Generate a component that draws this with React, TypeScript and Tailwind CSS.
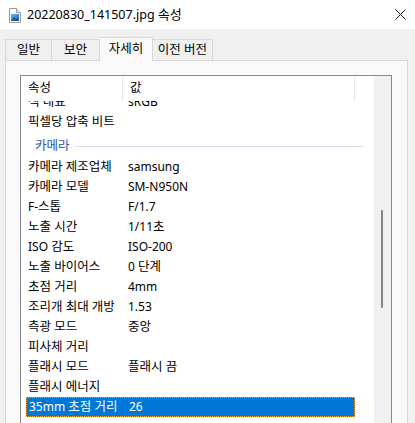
import React from "react";

const font = { fontFamily: '"Noto Sans", "Noto Sans CJK KR", sans-serif' };

function T({ s }: { s: string }) {
  const parts = s.split(/([\uac00-\ud7a3]+)/);
  return (
    <>
      {parts.map((p, i) =>
        /[\uac00-\ud7a3]/.test(p) ? (
          <span key={i} className="text-[12.5px]">
            {p}
          </span>
        ) : (
          <span key={i}>{p}</span>
        )
      )}
    </>
  );
}

const rows: [string, string][] = [
  ["카메라 제조업체", "samsung"],
  ["카메라 모델", "SM-N950N"],
  ["F-스톱", "F/1.7"],
  ["노출 시간", "1/11초"],
  ["ISO 감도", "ISO-200"],
  ["노출 바이어스", "0 단계"],
  ["초점 거리", "4mm"],
  ["조리개 최대 개방", "1.53"],
  ["측광 모드", "중앙"],
  ["피사체 거리", ""],
  ["플래시 모드", "플래시 끔"],
  ["플래시 에너지", ""],
];

function Row({ name, value, selected }: { name: string; value: string; selected?: boolean }) {
  return (
    <div
      className={
        "ml-[5px] flex h-[20px] w-[329px] items-center pl-[2px] text-[12px] leading-[16px] " +
        (selected ? "border border-dotted border-[#f0a030] bg-[#0078d7] text-white" : "text-black")
      }
    >
      <div className="w-[100px] shrink-0 whitespace-nowrap">
        <T s={name} />
      </div>
      <div className="whitespace-nowrap">
        <T s={value} />
      </div>
    </div>
  );
}

function FileIcon() {
  return (
    <svg width="13" height="15" viewBox="0 0 13 15">
      <path d="M1.5 0.5 H8.5 L12.5 4.5 V14.5 H1.5 Z" fill="#ffffff" stroke="#9a9a9a" />
      <path d="M8.5 0.5 V4.5 H12.5" fill="#e8e8e8" stroke="#9a9a9a" />
      <defs>
        <linearGradient id="g" x1="0" y1="0" x2="1" y2="1">
          <stop offset="0" stopColor="#6fb6f0" />
          <stop offset="1" stopColor="#1d5fc0" />
        </linearGradient>
      </defs>
      <rect x="3" y="6" width="8" height="7" fill="url(#g)" />
      <path d="M3 13 L6 9 L8 11 L9.5 9.5 L11 13 Z" fill="#2a4f9a" />
    </svg>
  );
}

export default function App() {
  return (
    <div className="flex h-[423px] w-[415px] flex-col overflow-hidden bg-[#f0f0f0]" style={font}>
      {/* title bar */}
      <div className="flex h-[29px] shrink-0 items-center bg-white">
        <div className="ml-[8px] mt-[1px] flex">
          <FileIcon />
        </div>
        <div className="ml-[6px] text-[12.5px] leading-[18px] text-black">
          20220830_141507.jpg <span className="text-[13px]">속성</span>
        </div>
        <div className="ml-auto mr-[9px] flex">
          <svg width="11" height="11" viewBox="0 0 11 11">
            <path d="M0.5 0.5 L10.5 10.5 M10.5 0.5 L0.5 10.5" stroke="#1a1a1a" strokeWidth="1" />
          </svg>
        </div>
      </div>

      {/* tabs */}
      <div className="flex h-[31px] shrink-0 items-end pl-[5px] text-[12.5px] leading-[16px] text-black">
        <div className="flex h-[21px] w-[47px] items-center justify-center border border-b-0 border-[#d9d9d9] bg-[#f0f0f0]">
          일반
        </div>
        <div className="flex h-[21px] w-[48px] items-center justify-center border border-b-0 border-l-0 border-[#d9d9d9] bg-[#f0f0f0]">
          보안
        </div>
        <div className="relative z-10 -mb-px flex h-[24px] w-[53px] items-center justify-center border border-b-0 border-l-0 border-[#d9d9d9] bg-[#f9f9f9] pb-[2px]">
          자세히
        </div>
        <div className="flex h-[21px] w-[60px] items-center justify-center border border-b-0 border-l-0 border-[#d9d9d9] bg-[#f0f0f0]">
          이전 버전
        </div>
      </div>

      {/* panel */}
      <div className="ml-[5px] mr-[7px] flex min-h-0 flex-1 flex-col border border-b-0 border-[#d9d9d9] bg-[#f9f9f9] pl-[14px] pr-[15px] pt-[14px]">
        <div className="flex min-h-0 flex-1 border border-b-0 border-[#828790] bg-white">
          {/* content */}
          <div className="flex min-w-0 flex-1 flex-col">
            <div className="flex h-[25px] shrink-0 items-center text-[12.5px] text-black">
              <div className="flex h-full w-[101px] items-center pl-[7px]">속성</div>
              <div className="mt-[1px] h-[24px] w-px self-start bg-[#e5e5e5]" />
              <div className="flex h-full w-[231px] items-center pl-[7px]">값</div>
              <div className="mt-[1px] h-[24px] w-px self-start bg-[#e5e5e5]" />
            </div>
            <div className="min-h-0 flex-1 overflow-hidden">
              <div className="-mt-[9px]">
                <Row name="색 내표" value="sRGB" />
                <Row name="픽셀당 압축 비트" value="" />
                <div className="flex h-[25px] items-center pl-[14px] pr-[11px] pt-[3px] text-[12.5px] text-[#2b56a8]">
                  <span className="whitespace-nowrap">카메라</span>
                  <div className="ml-[5px] h-px flex-1 bg-[#d8deee]" />
                </div>
                {rows.map(([n, v]) => (
                  <Row key={n} name={n} value={v} />
                ))}
                <Row name="35mm 초점 거리" value="26" selected />
              </div>
            </div>
          </div>
          {/* scrollbar */}
          <div className="flex w-[17px] shrink-0 flex-col bg-[#f0f0f0] pl-[7px] pt-[134px]">
            <div className="h-[98px] w-[2px] rounded-full bg-[#858585]" />
          </div>
        </div>
      </div>
    </div>
  );
}
